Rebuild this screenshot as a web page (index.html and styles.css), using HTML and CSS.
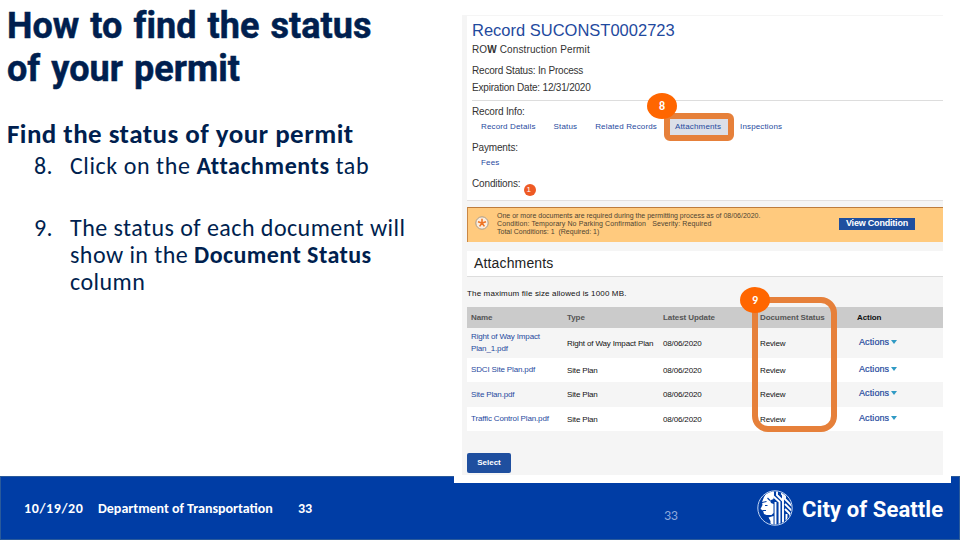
FILE: index.html
```
<!DOCTYPE html>
<html lang="en">
<head>
    <meta charset="UTF-8">
    <meta name="viewport" content="width=device-width, initial-scale=1.0">
    <title>How to find the status of your permit</title>
    <link rel="stylesheet" href="styles.css">
</head>
<body>
    <div class="slide">
        <div class="content">
            <div class="intro">
                <h1>How to find the status<br>of your permit</h1>
                <h2>Find the status of your permit</h2>
                <div class="step">
                    <span class="num">8.</span>
                    <p>Click on the <b>Attachments</b> tab</p>
                </div>
                <div class="step">
                    <span class="num">9.</span>
                    <p>The status of each document will<br>show in the <b>Document Status</b><br>column</p>
                </div>
            </div>

            <div class="shot">
                <div class="portal">
                    <div class="record">
                        <h3>Record SUCONST0002723</h3>
                        <p class="kind">RO<b>W</b> Construction Permit</p>
                        <p class="status">Record Status: In Process</p>
                        <p class="expires">Expiration Date: 12/31/2020</p>
                        <div class="info">
                            <p class="label">Record Info:</p>
                            <div class="tabs">
                                <a>Record Details</a>
                                <a>Status</a>
                                <a>Related Records</a>
                                <a class="active">Attachments
                                    <i class="frame"></i><i class="badge">8</i>
                                </a>
                                <a>Inspections</a>
                            </div>
                            <p class="label">Payments:</p>
                            <div class="tabs"><a>Fees</a></div>
                            <p class="label">Conditions:<em class="count">1</em></p>
                        </div>
                    </div>

                    <div class="alert">
                        <svg class="alertIcon" width="14" height="14" viewBox="0 0 14 14">
                            <circle cx="7" cy="7" r="6.2" fill="#fdeedd" stroke="#a99a88"/>
                            <path d="M7 7V2.8M7 7L3 5.7M7 7L11 5.7M7 7L4.6 10.4M7 7L9.4 10.4" stroke="#ee7526" stroke-width="1.6"/>
                        </svg>
                        <p class="alertText">
                            One or more documents are required during the permitting process as of 08/06/2020.<br>
                            <span class="wide">Condition: Temporary No Parking Confirmation &nbsp; Severity: Required</span><br>
                            Total Conditions: 1&nbsp; (Required: 1)
                        </p>
                        <a class="view">View Condition</a>
                    </div>

                    <h4>Attachments</h4>
                    <p class="limit">The maximum file size allowed is 1000 MB.</p>

                    <div class="table">
                        <div class="row head">
                            <span>Name</span><span>Type</span><span>Latest Update</span><span>Document Status</span><span class="dark">Action</span>
                        </div>
                        <div class="row tall">
                            <a>Right of Way Impact<br>Plan_1.pdf</a><span>Right of Way Impact Plan</span><span>08/06/2020</span><span>Review</span><a class="act">Actions<i class="caret"></i></a>
                        </div>
                        <div class="row odd">
                            <a>SDCI Site Plan.pdf</a><span>Site Plan</span><span>08/06/2020</span><span>Review</span><a class="act">Actions<i class="caret"></i></a>
                        </div>
                        <div class="row">
                            <a>Site Plan.pdf</a><span>Site Plan</span><span>08/06/2020</span><span>Review</span><a class="act">Actions<i class="caret"></i></a>
                        </div>
                        <div class="row odd">
                            <a>Traffic Control Plan.pdf</a><span>Site Plan</span><span>08/06/2020</span><span>Review</span><a class="act">Actions<i class="caret"></i></a>
                        </div>
                        <i class="frame"></i><i class="badge">9</i>
                    </div>
                    <a class="select">Select</a>
                </div>
            </div>
        </div>

        <div class="footer">
            <span class="date">10/19/20</span>
            <span class="dept">Department of Transportation</span>
            <span class="page">33</span>
            <span class="page2">33</span>
            <svg class="seal" width="36" height="36" viewBox="0 0 36 36">
                <defs><clipPath id="disc"><circle cx="18" cy="18" r="16.4"/></clipPath></defs>
                <circle cx="18" cy="18" r="17.2" fill="none" stroke="#d5e4fb" stroke-width="0.9"/>
                <g clip-path="url(#disc)">
                    <!-- face -->
                    <path d="M10 2L16.500 1.500V9L13 10.500L14 13L16.500 14V23L14.500 25H9.500L7 24L6 20.500L3.500 19L5.500 15L5 12L7 7Z" fill="#fff"/>
                    <path d="M5 12.500L9.500 11.500M8 15.500H10.500M6 20.500H9M13 10.500L10.500 8" stroke="#003da5" stroke-width="1.200"/>
                    <path d="M11.500 27.500L16.500 26V36H13.500V31Z" fill="#fff"/>
                    <!-- hair -->
                    <path d="M16 1V6L22.500 12V36M20 0V5L26 11V15M25 0V4L26 5V36M28 3V9L36 17M18.500 12V36M28 14L36 22M28 19L33 24V30M29.500 24V34" fill="none" stroke="#fff" stroke-width="1.900"/>
                </g>
            </svg>
            <span class="city">City of Seattle</span>
        </div>
    </div>
</body>
</html>
```
FILE: styles.css
```
*{margin: 0;padding: 0;box-sizing: border-box;}
body{width: 960px;height: 540px;overflow: hidden;background: #fff;}
i, em{font-style: normal;}
a, span{white-space: nowrap;}

.slide{
    width: 960px;
    height: 540px;
    display: flex;
    flex-direction: column;
    font-family: Carlito, Lato, sans-serif;
    color: #001f4f;
}

.content{
    height: 476px;
    display: flex;
}

/* left column */
.intro{
    width: 454px;
    padding: 5px 0 0 7px;
}
.intro h1{
    font: bold 36px/43px Roboto, sans-serif;
    word-spacing: 2px;
    letter-spacing: 0.05px;
    -webkit-text-stroke: 0.5px #001f4f;
}
.intro h2{
    font-size: 27px;
    line-height: 32px;
    letter-spacing: 0.45px;
    margin-top: 27px;
}
.step{
    display: flex;
    font-size: 24px;
    line-height: 27px;
    letter-spacing: 0.45px;
    padding: 2px 0 0 27px;
    margin-bottom: 33px;
}
.step:first-of-type p{letter-spacing: 0.57px;}
.step .num{width: 36px;}

/* portal page */
.shot{
    width: 497px;
    height: 483px;
    padding: 15px 8px 8px 8px;
    background: #fff;
    position: relative;
    z-index: 1;
}
.portal{
    height: 460px;
    padding: 1px 0 0 5px;
    background: #f5f5f5;
    font-family: "Liberation Sans", Arial, sans-serif;
    font-size: 8px;
    color: #222;
}
.record{
    height: 185px;
    padding: 4px 0 0 5px;
    background: #fff;
    border-bottom: 1px solid #e2e0e0;
    font-size: 10px;
    color: #333;
}
.record h3{
    font-size: 16.5px;
    line-height: 20px;
    font-weight: normal;
    color: #1f4a9e;
}
.kind{line-height: 20px;letter-spacing: 0.12px;}
.status{line-height: 22px;letter-spacing: -0.2px;}
.expires{line-height: 11px;letter-spacing: -0.2px;}
.info{
    margin-top: 7px;
    padding-top: 4px;
    border-top: 1px solid #ddd;
}
.label{
    display: flex;
    line-height: 14px;
    letter-spacing: -0.15px;
}
.tabs{
    display: flex;
    height: 22px;
    padding-left: 9px;
    font-size: 8px;
    line-height: 16px;
    letter-spacing: 0.15px;
    color: #1f4a9e;
}
.tabs a{margin-right: 18px;}
.tabs .active{
    position: relative;
    width: 58px;
    height: 16px;
    padding: 0 5px;
    margin: 0 12px 0 -5px;
    background: #dcdfe8;
}
.frame{
    position: absolute;
    border: 6px solid #e6803a;
}
.badge{
    position: absolute;
    width: 30px;
    height: 26px;
    border-radius: 50%;
    background: #ff6600;
    color: #fff;
    font: bold 12px/26px Carlito, Lato, sans-serif;
    text-align: center;
}
.active .frame{inset: -6px;border-radius: 6px;}
.active .badge{left: -23px;top: -26px;}
.count{
    width: 12px;
    height: 12px;
    margin: 7px 0 0 4px;
    border-radius: 50%;
    background: #ee5a24;
    color: #fff;
    font-size: 8px;
    line-height: 12px;
    padding-left: 2px;
}

.alert{
    display: flex;
    height: 35px;
    margin-top: 6px;
    padding-left: 7px;
    background: #ffca7e;
    border-top: 1px solid #bd7c3c;
    border-left: 1px solid #c98745;
}
.alertIcon{margin-top: 8px;}
.alertText{
    width: 350px;
    padding: 4px 0 0 8px;
    font-size: 7px;
    line-height: 8px;
    color: #4e4433;
}
.wide{letter-spacing: 0.1px;}
.view{
    width: 76px;
    height: 12px;
    margin-top: 10px;
    background: #1f4f9f;
    color: #fff;
    font-size: 9px;
    font-weight: bold;
    line-height: 11px;
    letter-spacing: -0.2px;
    text-align: center;
}

.portal h4{
    height: 26px;
    margin-top: 9px;
    padding-left: 7px;
    background: #fff;
    border-bottom: 1px solid #ddd;
    font-size: 14px;
    font-weight: normal;
    line-height: 25px;
    letter-spacing: 0.15px;
}
.limit{
    height: 30px;
    font-size: 8px;
    line-height: 33px;
    letter-spacing: 0.15px;
    color: #111;
}
.table{position: relative;}
.row{
    display: grid;
    grid-template-columns: 96px 96px 97px 99px 88px;
    align-items: center;
    height: 25px;
    padding-left: 4px;
    font-size: 8px;
    letter-spacing: -0.15px;
    color: #111;
}
.row a{color: #1f4a9e;line-height: 12px;}
.head{
    height: 21px;
    background: #cbcbcb;
    color: #555;
    font-weight: bold;
    letter-spacing: -0.08px;
}
.head .dark{margin-left: -2px;color: #111;}
.tall{height: 30px;}
.odd{height: 24px;background: #fff;}
.row .act{
    font-size: 9px;
    letter-spacing: 0.1px;
    padding-bottom: 3px;
    -webkit-text-stroke: 0.2px #1f4a9e;
}
.caret{
    display: inline-block;
    margin-left: 2px;
    border: 3px solid transparent;
    border-top: 4px solid #2f9ac4;
    border-bottom: 0;
    vertical-align: 1px;
}
.table .frame{
    left: 285px;
    top: -10px;
    width: 85px;
    height: 135px;
    border-radius: 16px;
}
.table .badge{left: 273px;top: -20px;}
.select{
    display: block;
    width: 44px;
    height: 20px;
    margin-top: 22px;
    border-radius: 2px;
    background: #1f4f9f;
    color: #fff;
    font-size: 8px;
    font-weight: bold;
    line-height: 20px;
    text-align: center;
}

/* footer bar */
.footer{
    display: flex;
    align-items: center;
    height: 64px;
    padding-left: 23px;
    background: #003da5;
    border: 1px solid #2a5a9a;
    color: #fff;
    font-size: 14px;
    font-weight: bold;
}
.date{width: 74px;letter-spacing: 0.6px;}
.dept{width: 200px;}
.page{width: 366px;}
.page2{
    width: 93px;
    padding-top: 15px;
    font-weight: normal;
    letter-spacing: -0.3px;
    color: #8fa9dc;
}
.city{
    margin-left: 9px;
    padding-top: 3px;
    font: bold 22px/30px Roboto, sans-serif;
    letter-spacing: 0.1px;
}
```
